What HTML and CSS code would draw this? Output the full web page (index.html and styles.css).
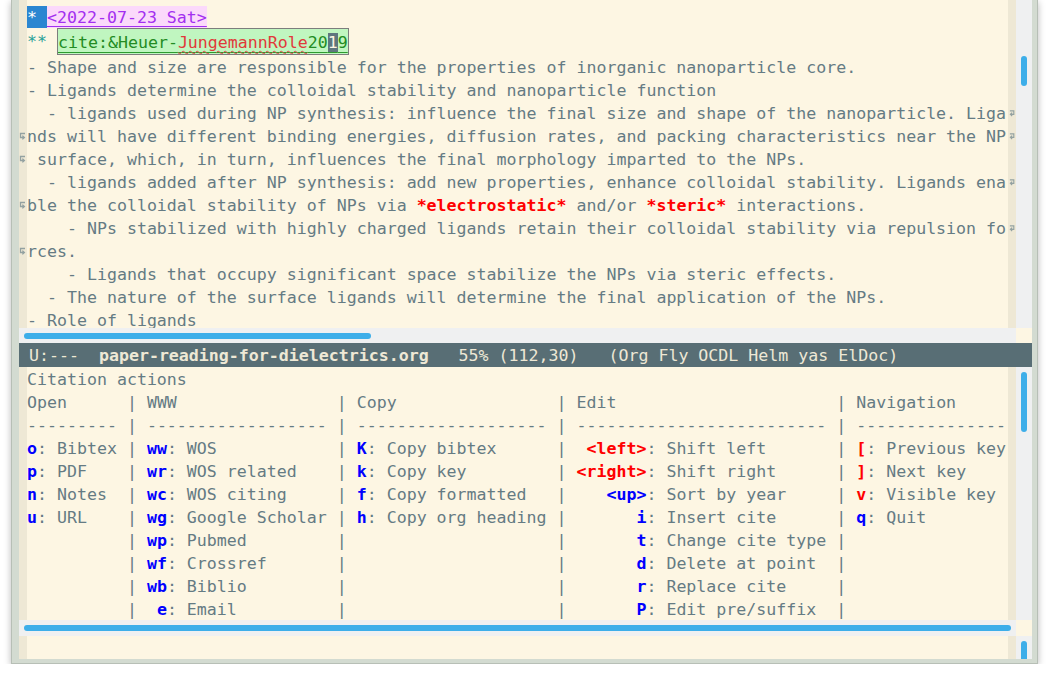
FILE: index.html
```
<!DOCTYPE html>
<html>
<head>
<meta charset="utf-8">
<link rel="stylesheet" href="styles.css">
</head>
<body>
<div class="frame">
  <div class="win top">
    <div class="win-main">
      <div class="body">
        <div class="row"><i class="lf"></i><span class="tx"><span class="star1">* </span><span class="date">&lt;2022-07-23 Sat&gt;</span></span><i class="rf"></i></div>
        <div class="row tall"><i class="lf"></i><span class="tx"><span class="star2">** </span><span class="cite">cite:&amp;Heuer-<span class="typo">JungemannRole</span>20<span class="cursor">1</span>9</span></span><i class="rf"></i></div>
        <div class="row"><i class="lf"></i><span class="tx">- Shape and size are responsible for the properties of inorganic nanoparticle core.</span><i class="rf"></i></div>
        <div class="row"><i class="lf"></i><span class="tx">- Ligands determine the colloidal stability and nanoparticle function</span><i class="rf"></i></div>
        <div class="row"><i class="lf"></i><span class="tx">  - ligands used during NP synthesis: influence the final size and shape of the nanoparticle. Liga</span><i class="rf"><svg class="arr" viewBox="0 0 8 8"><path d="M1 1.5H5.5V5.5H2M3.6 3.6L1.6 5.5L3.6 7.4"/></svg></i></div>
        <div class="row"><i class="lf"><svg class="arr" viewBox="0 0 8 8"><path d="M7 1.5H2.5V5.5H6M4.4 3.6L6.4 5.5L4.4 7.4"/></svg></i><span class="tx">nds will have different binding energies, diffusion rates, and packing characteristics near the NP</span><i class="rf"><svg class="arr" viewBox="0 0 8 8"><path d="M1 1.5H5.5V5.5H2M3.6 3.6L1.6 5.5L3.6 7.4"/></svg></i></div>
        <div class="row"><i class="lf"><svg class="arr" viewBox="0 0 8 8"><path d="M7 1.5H2.5V5.5H6M4.4 3.6L6.4 5.5L4.4 7.4"/></svg></i><span class="tx"> surface, which, in turn, influences the final morphology imparted to the NPs.</span><i class="rf"></i></div>
        <div class="row"><i class="lf"></i><span class="tx">  - ligands added after NP synthesis: add new properties, enhance colloidal stability. Ligands ena</span><i class="rf"><svg class="arr" viewBox="0 0 8 8"><path d="M1 1.5H5.5V5.5H2M3.6 3.6L1.6 5.5L3.6 7.4"/></svg></i></div>
        <div class="row"><i class="lf"><svg class="arr" viewBox="0 0 8 8"><path d="M7 1.5H2.5V5.5H6M4.4 3.6L6.4 5.5L4.4 7.4"/></svg></i><span class="tx">ble the colloidal stability of NPs via <b class="em">*electrostatic*</b> and/or <b class="em">*steric*</b> interactions.</span><i class="rf"></i></div>
        <div class="row"><i class="lf"></i><span class="tx">    - NPs stabilized with highly charged ligands retain their colloidal stability via repulsion fo</span><i class="rf"><svg class="arr" viewBox="0 0 8 8"><path d="M1 1.5H5.5V5.5H2M3.6 3.6L1.6 5.5L3.6 7.4"/></svg></i></div>
        <div class="row"><i class="lf"><svg class="arr" viewBox="0 0 8 8"><path d="M7 1.5H2.5V5.5H6M4.4 3.6L6.4 5.5L4.4 7.4"/></svg></i><span class="tx">rces.</span><i class="rf"></i></div>
        <div class="row"><i class="lf"></i><span class="tx">    - Ligands that occupy significant space stabilize the NPs via steric effects.</span><i class="rf"></i></div>
        <div class="row"><i class="lf"></i><span class="tx">  - The nature of the surface ligands will determine the final application of the NPs.</span><i class="rf"></i></div>
        <div class="row"><i class="lf"></i><span class="tx">- Role of ligands</span><i class="rf"></i></div>
      </div>
      <div class="hscroll"><div class="hthumb short"></div></div>
    </div>
    <div class="vscroll">
      <div class="vtrack"><div class="vthumb"></div></div>
      <div class="corner"></div>
    </div>
  </div>

  <div class="modeline"> U:---  <b>paper-reading-for-dielectrics.org</b>   55% (112,30)   (Org Fly OCDL Helm yas ElDoc)</div>

  <div class="win bottom">
    <div class="win-main">
      <div class="body">
        <div class="row"><i class="lf"></i><span class="tx">Citation actions</span><i class="rf"></i></div>
        <div class="row"><i class="lf"></i><span class="tx"><span class="c1">Open</span> | <span class="c2">WWW</span> | <span class="c3">Copy</span> | <span class="c4">Edit</span> | Navigation</span><i class="rf"></i></div>
        <div class="row"><i class="lf"></i><span class="tx"><span class="c1">---------</span> | <span class="c2">------------------</span> | <span class="c3">-------------------</span> | <span class="c4">-------------------------</span> | ---------------</span><i class="rf"></i></div>
        <div class="row"><i class="lf"></i><span class="tx"><span class="c1"><b class="kb">o</b>: Bibtex</span> | <span class="c2"><b class="kb">ww</b>: WOS</span> | <span class="c3"><b class="kb">K</b>: Copy bibtex</span> | <span class="c4"><b class="k4 kr">&lt;left&gt;</b>: Shift left</span> | <b class="kr">[</b>: Previous key</span><i class="rf"></i></div>
        <div class="row"><i class="lf"></i><span class="tx"><span class="c1"><b class="kb">p</b>: PDF</span> | <span class="c2"><b class="kb">wr</b>: WOS related</span> | <span class="c3"><b class="kb">k</b>: Copy key</span> | <span class="c4"><b class="k4 kr">&lt;right&gt;</b>: Shift right</span> | <b class="kr">]</b>: Next key</span><i class="rf"></i></div>
        <div class="row"><i class="lf"></i><span class="tx"><span class="c1"><b class="kb">n</b>: Notes</span> | <span class="c2"><b class="kb">wc</b>: WOS citing</span> | <span class="c3"><b class="kb">f</b>: Copy formatted</span> | <span class="c4"><b class="k4 kb">&lt;up&gt;</b>: Sort by year</span> | <b class="kr">v</b>: Visible key</span><i class="rf"></i></div>
        <div class="row"><i class="lf"></i><span class="tx"><span class="c1"><b class="kb">u</b>: URL</span> | <span class="c2"><b class="kb">wg</b>: Google Scholar</span> | <span class="c3"><b class="kb">h</b>: Copy org heading</span> | <span class="c4"><b class="k4 kb">i</b>: Insert cite</span> | <b class="kb">q</b>: Quit</span><i class="rf"></i></div>
        <div class="row"><i class="lf"></i><span class="tx"><span class="c1"></span> | <span class="c2"><b class="kb">wp</b>: Pubmed</span> | <span class="c3"></span> | <span class="c4"><b class="k4 kb">t</b>: Change cite type</span> |</span><i class="rf"></i></div>
        <div class="row"><i class="lf"></i><span class="tx"><span class="c1"></span> | <span class="c2"><b class="kb">wf</b>: Crossref</span> | <span class="c3"></span> | <span class="c4"><b class="k4 kb">d</b>: Delete at point</span> |</span><i class="rf"></i></div>
        <div class="row"><i class="lf"></i><span class="tx"><span class="c1"></span> | <span class="c2"><b class="kb">wb</b>: Biblio</span> | <span class="c3"></span> | <span class="c4"><b class="k4 kb">r</b>: Replace cite</span> |</span><i class="rf"></i></div>
        <div class="row"><i class="lf"></i><span class="tx"><span class="c1"></span> | <span class="c2"> <b class="kb">e</b>: Email</span> | <span class="c3"></span> | <span class="c4"><b class="k4 kb">P</b>: Edit pre/suffix</span> |</span><i class="rf"></i></div>
      </div>
      <div class="hscroll"><div class="hthumb long"></div></div>
    </div>
    <div class="vscroll">
      <div class="vtrack"><div class="vthumb"></div></div>
      <div class="corner"></div>
    </div>
  </div>

  <div class="mini">
    <div class="mini-main"></div>
    <div class="mini-scroll"><div class="mini-thumb"></div></div>
  </div>
</div>
</body>
</html>
```

FILE: styles.css
```
* { box-sizing: border-box; }

html, body {
  margin: 0;
  background: #ffffff;
}

body {
  font-family: "DejaVu Sans Mono", "Liberation Mono", monospace;
  font-size: 16.6px;
  color: #657b83;
}

.frame {
  margin-left: 11px;
  width: 1027px;
  height: 664px;
  background: #d3dbd1;
  border: 1px solid #b7bfb6;
  border-top: 0;
  padding: 0 5px 4px 7px;
  box-shadow: 0 2px 7px rgba(0, 0, 0, 0.28);
  display: flex;
  flex-direction: column;
}

.win { display: flex; }

.win-main {
  width: 997px;
  display: flex;
  flex-direction: column;
}

.body {
  background: linear-gradient(to right, #eee8d5 0 8px, #fdf6e3 8px 989px, #eee8d5 989px);
  overflow: hidden;
}

.top .body { height: 328px; padding-top: 5px; }
.bottom .body { height: 253px; }

.row {
  display: flex;
  height: 23px;
  line-height: 23px;
  white-space: pre;
}

.row.tall { height: 27px; line-height: 27px; }

.lf, .rf {
  width: 8px;
  flex: none;
  display: flex;
  align-items: center;
}

.tx {
  width: 981px;
  flex: none;
  overflow: hidden;
  padding-top: 1px;
}

.row.tall .tx { padding-top: 0; }

.arr {
  width: 8px;
  height: 8px;
  display: block;
  fill: none;
  stroke: #93a1a1;
  stroke-width: 1.3;
}

.lf .arr { margin-left: -1px; }
.rf .arr { margin-left: 1px; }

/* org heading line */
.star1 { background: #2b86d1; color: #ffffff; display: inline-block; }
.date {
  background: #fbd9fb;
  color: #a32ff0;
  text-decoration: underline;
  text-underline-offset: 3px;
  display: inline-block;
}

.star2 { color: #2aa198; }

.cite {
  display: inline-block;
  vertical-align: top;
  height: 27px;
  line-height: 26px;
  padding-top: 1px;
  border: 1px solid #7d7d7d;
  background: #c0f6c0;
  color: #238c23;
  text-decoration: underline #2e9a2e;
  text-underline-offset: 4px;
}

.typo {
  color: #e03a3a;
  text-decoration: underline wavy #e04848;
  text-decoration-thickness: 1px;
  text-underline-offset: 2px;
}

.cursor {
  background: #5f767e;
  color: #fdf6e3;
}

.em { color: #ff0000; font-weight: bold; }

/* citation actions table */
.c1, .c2, .c3, .c4 { display: inline-block; }
.c1 { width: 9ch; }
.c2 { width: 18ch; }
.c3 { width: 19ch; }
.c4 { width: 25ch; }

.k4 { display: inline-block; width: 7ch; text-align: right; }
.kb { color: #0000ff; font-weight: bold; }
.kr { color: #ff0000; font-weight: bold; }

/* scrollbars */
.hscroll {
  background: #eff0f1;
  padding: 5px 0 0 5px;
}
.top .hscroll { height: 15px; }
.bottom .hscroll { height: 16px; }

.hthumb {
  height: 6px;
  border-radius: 3px;
  background: #3daee9;
}
.hthumb.short { width: 347px; }
.hthumb.long { width: 987px; }

.vscroll {
  width: 16px;
  display: flex;
  flex-direction: column;
}

.vtrack {
  background: #eff0f1;
  padding-left: 5px;
}
.top .vtrack { height: 328px; padding-top: 56px; }
.bottom .vtrack { height: 253px; padding-top: 5px; }

.vthumb {
  width: 6px;
  border-radius: 3px;
  background: #3daee9;
}
.top .vthumb { height: 30px; }
.bottom .vthumb { height: 60px; }

.corner {
  flex: 1;
  background: #fdf6e3;
}

/* mode line */
.modeline {
  height: 24px;
  line-height: 24px;
  padding-top: 1px;
  background: #586e75;
  color: #eee8d5;
  white-space: pre;
}

/* minibuffer */
.mini {
  height: 23px;
  display: flex;
}

.mini-main {
  width: 997px;
  background: linear-gradient(to right, #eee8d5 0 8px, #fdf6e3 8px 989px, #eee8d5 989px);
}

.mini-scroll {
  width: 16px;
  background: #eff0f1;
  padding: 5px 0 0 5px;
  overflow: hidden;
}

.mini-thumb {
  width: 6px;
  height: 24px;
  border-radius: 3px;
  background: #3daee9;
}
```
